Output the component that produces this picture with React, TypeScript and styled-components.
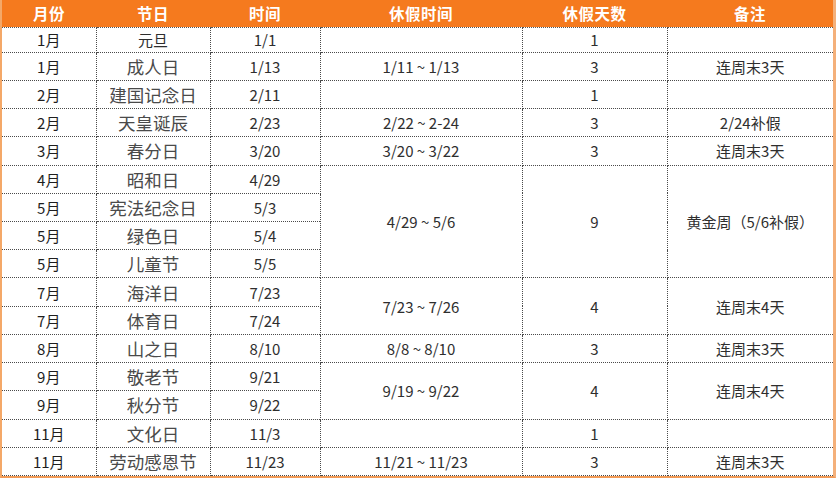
import React from "react";
import styled, { createGlobalStyle } from "styled-components";

const GlobalStyle = createGlobalStyle`
  html, body {
    margin: 0;
    padding: 0;
    background: #ffffff;
  }
  body {
    font-family: "Noto Sans CJK SC", "Noto Sans", sans-serif;
  }
`;

const Frame = styled.div`
  width: 836px;
  height: 478px;
  box-sizing: border-box;
  border-left: 2px solid #f4a868;
  border-right: 3px solid #f4b07a;
  border-bottom: 2px solid #f29a55;
  overflow: hidden;
  background: #ffffff;
`;

const Table = styled.table`
  width: 831px;
  height: 476px;
  border-collapse: collapse;
  table-layout: fixed;
`;

const HeadRow = styled.tr`
  height: 27px;
  background: #f57a1e;
`;

const HeadCell = styled.th`
  color: #ffffff;
  font-size: 15.5px;
  font-weight: 700;
  padding: 0;
  text-align: center;
  vertical-align: middle;
  border-bottom: 1px dotted #555555;
  letter-spacing: 0.5px;
`;

const Row = styled.tr<{ $first?: boolean }>`
  height: ${(p) => (p.$first ? "25px" : "28px")};
`;

const Cell = styled.td<{ $big?: boolean; $strong?: boolean; $orangeTop?: boolean }>`
  border: 1px dotted #4a4a4a;
  ${(p) => (p.$orangeTop ? "border-top-color: #e0915a;" : "")}
  color: ${(p) => (p.$big ? "#4a4a4a" : p.$strong ? "#1e1e1e" : "#2e2e2e")};
  font-size: ${(p) => (p.$big ? "17.5px" : "15px")};
  text-align: center;
  vertical-align: middle;
  padding: 0;
  white-space: nowrap;
  overflow: hidden;

  &:first-child {
    border-left: none;
  }
  &:last-child {
    border-right: none;
  }
`;

type Span = { text: string; span: number } | null;

type Item = {
  month: string;
  name: string;
  small?: boolean;
  date: string;
  range: Span;
  days: Span;
  note: Span;
};

const items: Item[] = [
  { month: "1月", name: "元旦", small: true, date: "1/1", range: { text: "", span: 1 }, days: { text: "1", span: 1 }, note: { text: "", span: 1 } },
  { month: "1月", name: "成人日", date: "1/13", range: { text: "1/11 ~ 1/13", span: 1 }, days: { text: "3", span: 1 }, note: { text: "连周末3天", span: 1 } },
  { month: "2月", name: "建国记念日", date: "2/11", range: { text: "", span: 1 }, days: { text: "1", span: 1 }, note: { text: "", span: 1 } },
  { month: "2月", name: "天皇诞辰", date: "2/23", range: { text: "2/22 ~ 2-24", span: 1 }, days: { text: "3", span: 1 }, note: { text: "2/24补假", span: 1 } },
  { month: "3月", name: "春分日", date: "3/20", range: { text: "3/20 ~ 3/22", span: 1 }, days: { text: "3", span: 1 }, note: { text: "连周末3天", span: 1 } },
  { month: "4月", name: "昭和日", date: "4/29", range: { text: "4/29 ~ 5/6", span: 4 }, days: { text: "9", span: 4 }, note: { text: "黄金周（5/6补假）", span: 4 } },
  { month: "5月", name: "宪法纪念日", date: "5/3", range: null, days: null, note: null },
  { month: "5月", name: "绿色日", date: "5/4", range: null, days: null, note: null },
  { month: "5月", name: "儿童节", date: "5/5", range: null, days: null, note: null },
  { month: "7月", name: "海洋日", date: "7/23", range: { text: "7/23 ~ 7/26", span: 2 }, days: { text: "4", span: 2 }, note: { text: "连周末4天", span: 2 } },
  { month: "7月", name: "体育日", date: "7/24", range: null, days: null, note: null },
  { month: "8月", name: "山之日", date: "8/10", range: { text: "8/8 ~ 8/10", span: 1 }, days: { text: "3", span: 1 }, note: { text: "连周末3天", span: 1 } },
  { month: "9月", name: "敬老节", date: "9/21", range: { text: "9/19 ~ 9/22", span: 2 }, days: { text: "4", span: 2 }, note: { text: "连周末4天", span: 2 } },
  { month: "9月", name: "秋分节", date: "9/22", range: null, days: null, note: null },
  { month: "11月", name: "文化日", date: "11/3", range: { text: "", span: 1 }, days: { text: "1", span: 1 }, note: { text: "", span: 1 } },
  { month: "11月", name: "劳动感恩节", date: "11/23", range: { text: "11/21 ~ 11/23", span: 1 }, days: { text: "3", span: 1 }, note: { text: "连周末3天", span: 1 } },
];

const widths = [94, 114, 110, 202, 145, 166];
const heads = ["月份", "节日", "时间", "休假时间", "休假天数", "备注"];

const App: React.FC = () => {
  const last = items.length - 1;
  return (
    <>
      <GlobalStyle />
      <Frame>
        <Table>
          <colgroup>
            {widths.map((w, i) => (
              <col key={i} style={{ width: w }} />
            ))}
          </colgroup>
          <thead>
            <HeadRow>
              {heads.map((h) => (
                <HeadCell key={h}>{h}</HeadCell>
              ))}
            </HeadRow>
          </thead>
          <tbody>
            {items.map((it, i) => {
              const top = i === last;
              return (
                <Row key={i} $first={i === 0}>
                  <Cell $orangeTop={top} $strong>
                    {it.month}
                  </Cell>
                  <Cell $orangeTop={top} $big={!it.small}>
                    {it.name}
                  </Cell>
                  <Cell $orangeTop={top}>{it.date}</Cell>
                  {[it.range, it.days, it.note].map((s, k) =>
                    s ? (
                      <Cell key={k} rowSpan={s.span} $orangeTop={top}>
                        {s.text}
                      </Cell>
                    ) : null
                  )}
                </Row>
              );
            })}
          </tbody>
        </Table>
      </Frame>
    </>
  );
};

export default App;
